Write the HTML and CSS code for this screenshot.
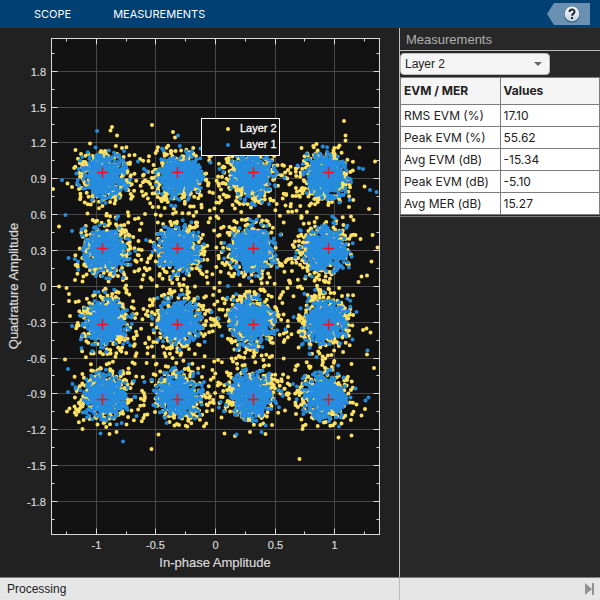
FILE: index.html
```html
<!DOCTYPE html>
<html lang="en">
<head>
    <meta charset="UTF-8">
    <meta name="viewport" content="width=device-width, initial-scale=1.0">
    <title>Constellation Diagram</title>
    <link rel="stylesheet" href="styles.css">
</head>

<body>
<header class="toolstrip">
    <nav class="tabs">
        <button type="button" class="tab">SCOPE</button>
        <button type="button" class="tab">MEASUREMENTS</button>
    </nav>
    <button type="button" class="help" aria-label="Help">
        <svg width="43" height="22" viewBox="0 0 43 22">
            <defs>
                <linearGradient id="ball" x1="0" y1="0" x2="0" y2="1">
                    <stop offset="0" stop-color="#ffffff"/>
                    <stop offset="1" stop-color="#bcd0df"/>
                </linearGradient>
            </defs>
            <path d="M0 11 7 0h36v22H7z" fill="#6a90b2"/>
            <circle cx="25" cy="11.5" r="8" fill="#244f74"/>
            <circle cx="25" cy="11" r="7.5" fill="url(#ball)"/>
            <path d="M22.500 9c0-3.300 5-3.300 5-.3 0 2-2.400 1.800-2.400 4" fill="none" stroke="#1f2a33" stroke-width="2"/>
            <rect x="24" y="14" width="2" height="2" fill="#1f2a33"/>
        </svg>
    </button>
</header>

<main class="workspace">
    <section class="scope">
        <svg class="chart" viewBox="0 28 399 549" role="img" aria-label="Constellation diagram">
            <rect class="plot-area" x="51.5" y="38.5" width="328" height="496"/>
            <g id="grid"></g>
            <path id="layer2" class="layer2" d=""/>
            <path id="layer1" class="layer1" d=""/>
            <path id="reference" class="reference" d=""/>
            <path id="ticks" class="ticks" d=""/>
            <rect class="frame" x="51.5" y="38.5" width="328" height="496"/>
            <g id="labels" class="labels"></g>
            <text class="axis-title" x="215" y="567" text-anchor="middle">In-phase Amplitude</text>
            <text class="axis-title" transform="translate(18 286) rotate(-90)" text-anchor="middle">Quadrature Amplitude</text>
            <g class="legend">
                <rect x="201.5" y="118.5" width="78" height="37"/>
                <path class="layer2" d="M228 129h0"/>
                <path class="layer1" d="M228 145h0"/>
                <text x="240" y="132">Layer 2</text>
                <text x="240" y="148">Layer 1</text>
            </g>
        </svg>
    </section>

    <aside class="measurements">
        <h2 class="panel-title">Measurements</h2>
        <div class="layer-select">
            <select aria-label="Layer">
                <option>Layer 2</option>
                <option>Layer 1</option>
            </select>
            <svg class="arrow" width="8" height="4" viewBox="0 0 8 4"><path d="M0 0h8L4 4z" fill="#666"/></svg>
        </div>
        <table class="results">
            <thead>
            <tr><th>EVM / MER</th><th>Values</th></tr>
            </thead>
            <tbody>
            <tr><td>RMS EVM (%)</td><td>17.10</td></tr>
            <tr><td>Peak EVM (%)</td><td>55.62</td></tr>
            <tr><td>Avg EVM (dB)</td><td>-15.34</td></tr>
            <tr><td>Peak EVM (dB)</td><td>-5.10</td></tr>
            <tr><td>Avg MER (dB)</td><td>15.27</td></tr>
            </tbody>
        </table>
    </aside>
</main>

<footer class="status">
    <div class="status-text">Processing</div>
    <div class="status-end">
        <svg width="9" height="12" viewBox="0 0 9 12"><path d="M0 0l7 6-7 6zM7 0h2v12H7z" fill="#929292"/></svg>
    </div>
</footer>

<script src="chart.js"></script>
</body>
</html>
```
FILE: styles.css
```css
* {
    margin: 0;
    padding: 0;
    box-sizing: border-box;
}

body {
    display: flex;
    flex-direction: column;
    min-height: 100vh;
    font-family: "Liberation Sans", Arial, sans-serif;
    font-size: 12px;
    background-color: #212121;
    color: #212121;
}

button {
    border: none;
    background: none;
    cursor: pointer;
}

.toolstrip {
    display: flex;
    justify-content: space-between;
    align-items: center;
    height: 28px;
    padding: 0 10px 0 34px;
    background-color: #004072;
}

.tabs {
    display: flex;
    gap: 42px;
}

.tab {
    font-family: Inter, sans-serif;
    font-size: 11px;
    line-height: 32px;
    color: #fff;
}

.help svg {
    display: block;
}

.workspace {
    display: grid;
    grid-template-columns: 133fr 67fr;
    flex: 1;
}

.scope {
    min-width: 0;
}

.chart {
    display: block;
    width: 100%;
    font-family: "Liberation Sans", Arial, sans-serif;
}

.plot-area {
    fill: #121212;
}

.frame {
    fill: none;
    stroke: #d9d9d9;
}

.grid-line {
    stroke: #484848;
}

.ticks {
    fill: none;
    stroke: #d9d9d9;
}

.layer1,
.layer2 {
    fill: none;
    stroke-width: 4;
    stroke-linecap: round;
}

.layer1 {
    stroke: #268cdd;
}

.layer2 {
    stroke: #fee160;
}

.reference {
    fill: none;
    stroke: #f0101c;
    stroke-width: 1.5;
}

.labels {
    fill: #d9d9d9;
    font-size: 11px;
    stroke: #d9d9d9;
    stroke-width: 0.2px;
}

.axis-title {
    fill: #d9d9d9;
    font-size: 13px;
    stroke: #d9d9d9;
    stroke-width: 0.2px;
}

.legend rect {
    fill: #121212;
    stroke: #fff;
}

.legend text {
    fill: #fff;
    font-size: 11px;
    stroke: #fff;
    stroke-width: 0.3px;
}

.measurements {
    border-left: 1px solid #bdbdbd;
    background-color: #282828;
}

.panel-title {
    padding: 1px 0 0 6px;
    border-bottom: 1px solid #bdbdbd;
    font-size: 13px;
    font-weight: normal;
    line-height: 21px;
    color: #b0b0b0;
}

.layer-select {
    position: relative;
    width: 75%;
    margin: 2px 0;
}

.layer-select select {
    display: block;
    width: 100%;
    height: 22px;
    padding: 0 4px;
    border: 1px solid #bdbdbd;
    border-radius: 4px;
    appearance: none;
    background-color: #f5f5f5;
    font-family: inherit;
    font-size: 12px;
    color: #212121;
}

.arrow {
    position: absolute;
    top: 9px;
    right: 8px;
    pointer-events: none;
}

.results {
    width: 100%;
    border-collapse: collapse;
    table-layout: fixed;
    background-color: #fff;
    box-shadow: 0 1px #282828, 0 2px #7d7d7d;
    font-family: Inter, sans-serif;
    font-size: 12px;
}

.results th,
.results td {
    height: 22px;
    padding: 0 3px;
    border: 1px solid #7d7d7d;
    text-align: left;
    line-height: 16px;
}

.results th {
    height: 27px;
    background-color: #f5f5f5;
    font-weight: 700;
}

.status {
    display: grid;
    grid-template-columns: 133fr 67fr;
    height: 23px;
    border-top: 1px solid #7d7d7d;
    background-color: #e6e6e6;
    line-height: 22px;
}

.status-text {
    padding-left: 7px;
}

.status-end {
    display: flex;
    justify-content: flex-end;
    align-items: center;
    padding-right: 6px;
    border-left: 1px solid #bdbdbd;
}
```
FILE: chart.js
```js
const LEFT = 51.5, RIGHT = 379.5, TOP = 38.5, BOTTOM = 534.5;
const NS = 'http://www.w3.org/2000/svg';

const toX = v => Math.floor(215.5 + v * 119.2) + 0.5;
const toY = v => Math.floor(286.3 - v * 119.5) + 0.5;

function add(parent, name, attrs, text) {
    const node = document.createElementNS(NS, name);
    for (const key in attrs) node.setAttribute(key, attrs[key]);
    if (text !== undefined) node.textContent = text;
    document.getElementById(parent).appendChild(node);
}

// Grid lines, ticks and tick labels
let ticks = '';
for (let i = -5; i <= 5; i++) {
    const x = toX(i / 4);
    const len = i % 2 ? 3 : 6;
    ticks += `M${x} ${TOP}v${len}M${x} ${BOTTOM}v${-len}`;
    if (i % 2 === 0) {
        add('grid', 'path', {class: 'grid-line', d: `M${x} ${TOP}V${BOTTOM}`});
        add('labels', 'text', {x: x, y: 549, 'text-anchor': 'middle'}, i / 4);
    }
}
for (let i = -13; i <= 13; i++) {
    const y = toY(i * 0.15);
    const len = i % 2 ? 3 : 6;
    ticks += `M${LEFT} ${y}h${len}M${RIGHT} ${y}h${-len}`;
    if (i % 2 === 0) {
        add('grid', 'path', {class: 'grid-line', d: `M${LEFT} ${y}H${RIGHT}`});
        add('labels', 'text', {x: 46, y: y + 4, 'text-anchor': 'end'}, Math.round(i * 1.5) / 10);
    }
}
document.getElementById('ticks').setAttribute('d', ticks);

// Seeded generator so the cloud is the same on every load
let seed = 2024;
function random() {
    seed = (seed * 1664525 + 1013904223) % 4294967296;
    return (seed + 1) / 4294967297;
}

function cloud(cx, cy, count, spread, limit) {
    let d = '';
    for (let n = 0; n < count; n++) {
        const r = spread * Math.sqrt(-2 * Math.log(random()));
        const a = 2 * Math.PI * random();
        const x = cx + r * Math.cos(a), y = cy + r * Math.sin(a);
        if (r > limit || x < 74 || x > 354 || y < 145 || y > 427) continue;
        d += `M${x.toFixed(1)} ${y.toFixed(1)}h0`;
    }
    return d;
}

const dots = list => list.map(p => `M${p[0]} ${p[1]}h0`).join('');

const levels = [-0.949, -0.316, 0.316, 0.949];
let layer1 = '', layer2 = '', reference = '';
for (const q of levels) {
    for (const i of levels) {
        const cx = 215 + i * 116, cy = 286 - q * 116;
        layer2 += cloud(cx, cy, 290, 13, 40);
        layer2 += cloud(215 + i * 104, 286 - q * 104, 65, 22, 50);
        layer1 += cloud(cx, cy, 360, 9, 26);
        layer1 += cloud(cx, cy, 130, 13, 36);
        reference += `M${toX(i) - 5.5} ${toY(q)}h11M${toX(i)} ${toY(q) - 5.5}v11`;
    }
}

// Samples far from any reference point
layer2 += dots([
    [152, 125], [112, 127], [110.5, 130.5], [117, 135.5], [90, 143.5], [75.5, 150], [173, 132], [175, 137.5],
    [53, 189], [67.5, 183.5], [72, 187], [59, 226.5], [145, 214], [141.5, 223.5], [135, 219], [143, 175.5],
    [146, 194], [148.5, 161], [344, 121], [345.5, 135.5], [345.5, 140.5], [359.5, 147.5], [375, 161.5],
    [364.5, 186.5], [369, 209], [349, 207], [351, 216.5], [353.5, 220], [372.5, 235], [355.5, 235],
    [360.5, 239], [377.5, 247.5], [371.5, 261.5], [339.5, 145.5], [301.5, 148], [316.5, 144], [296, 169],
    [59, 286.5], [66.5, 288], [69, 294], [69, 301], [70, 316], [75, 280], [65, 359.5], [67, 411.5],
    [69.5, 408.5], [74.5, 406.5], [82.5, 429], [116.5, 432], [151.5, 449], [158.5, 434.5], [109.5, 434],
    [143.5, 418], [147.5, 353.5], [142.5, 279.5], [299.5, 459], [338.5, 437.5], [351.5, 435.5],
    [224.5, 433.5], [235, 436], [265.5, 434], [250, 432], [302.5, 429], [374, 368], [367, 354.5],
    [365, 409], [361.5, 415.5], [356.5, 404.5], [367, 275.5], [361.5, 276.5], [358.5, 282],
    [366.5, 328.5], [370.5, 332.5], [363, 330], [351.5, 364]
]);
layer1 += dots([
    [97, 131], [178, 135.5], [62, 180], [65.5, 215], [68.5, 258], [72, 231], [138, 161.5], [144, 169],
    [370, 190], [376.5, 192], [363, 169], [359, 168], [123, 441.5], [100.5, 433.5], [68, 369], [68, 392],
    [72, 326], [72.5, 384], [144.5, 382], [136.5, 416], [367.5, 350.5], [368.5, 397.5], [365.5, 400.5],
    [355.5, 388.5], [356.5, 312], [228, 286], [236.5, 434.5], [261.5, 432]
]);

document.getElementById('layer2').setAttribute('d', layer2);
document.getElementById('layer1').setAttribute('d', layer1);
document.getElementById('reference').setAttribute('d', reference);
```
